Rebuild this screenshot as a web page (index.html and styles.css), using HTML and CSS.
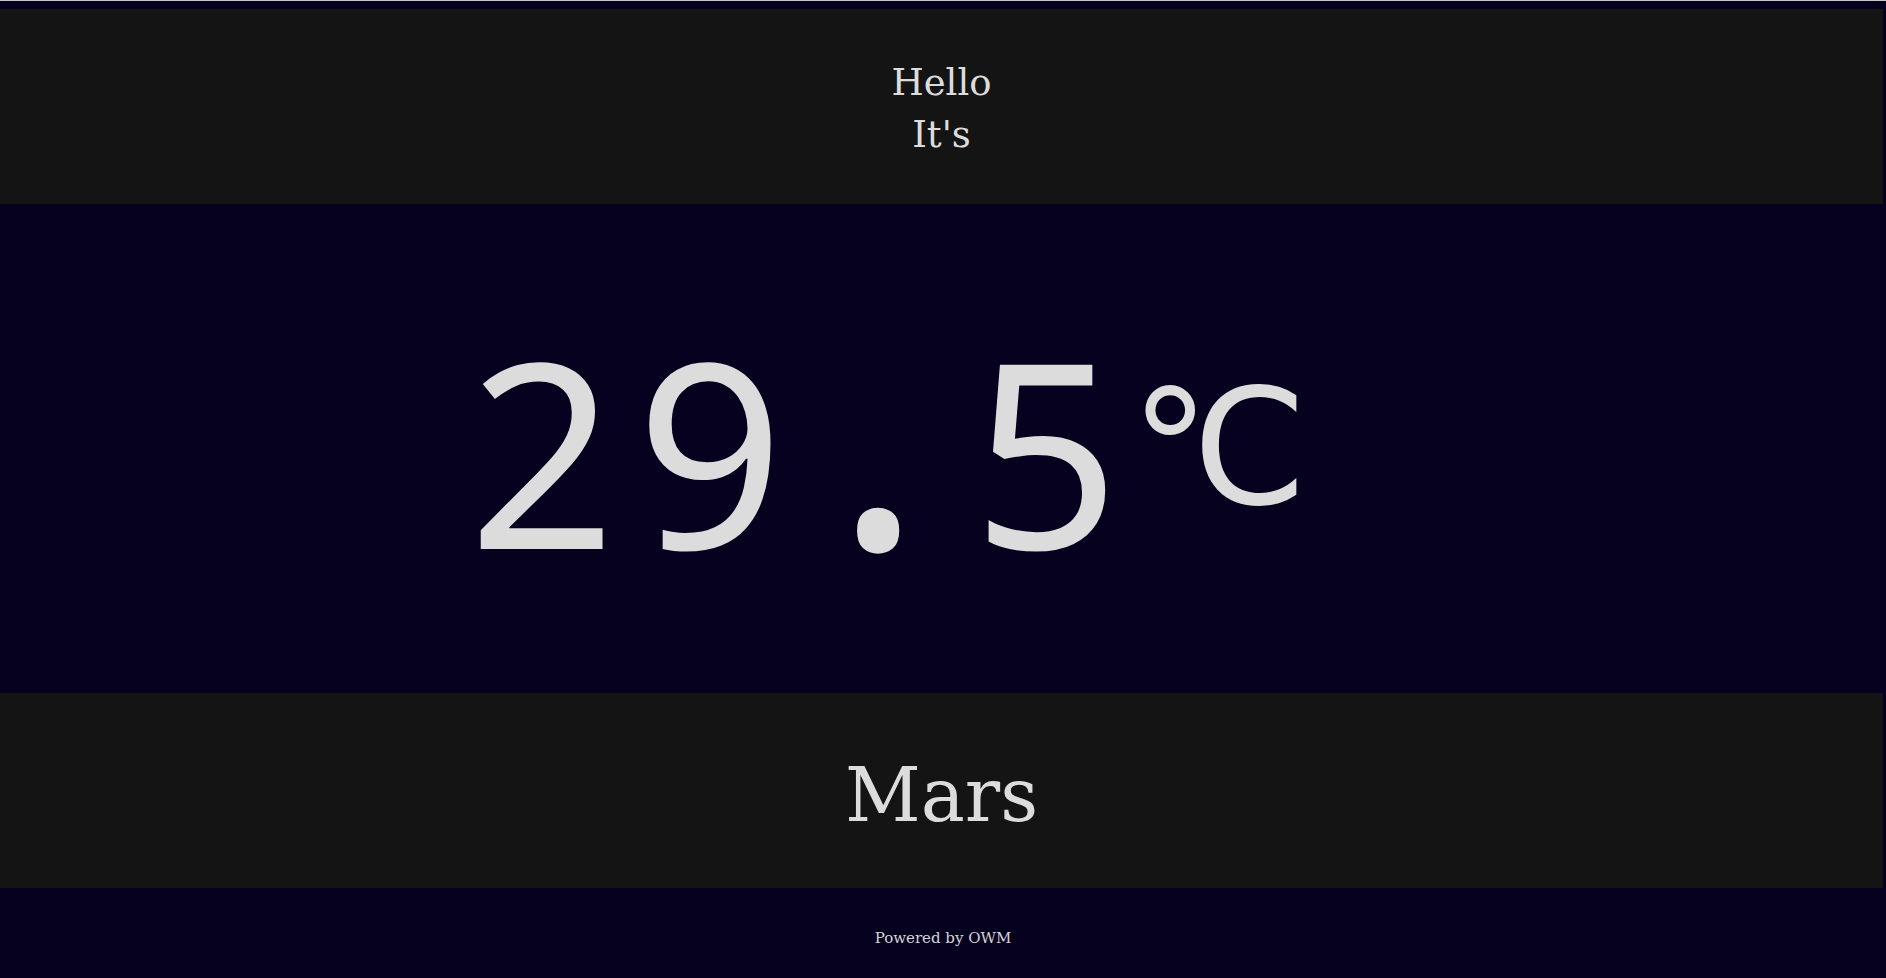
FILE: index.html
```html
<!DOCTYPE html>
<html lang="en">
<head>
<meta charset="utf-8">
<title>Weather</title>
<link rel="stylesheet" href="styles.css">
</head>
<body>
<div class="page">
  <header class="band greeting">
    <div class="line">Hello</div>
    <div class="line">It's</div>
  </header>
  <main class="temp">
    <div class="temp-value"><span class="digits"><span class="ch">2</span><span class="ch">9</span><span class="ch"><span class="dot">.</span></span><span class="ch">5</span></span><span class="unit">°C</span></div>
  </main>
  <section class="band place">
    <div class="planet">Mars</div>
  </section>
  <footer class="footer">Powered by OWM</footer>
</div>
</body>
</html>
```
FILE: styles.css
```css
html, body {
  margin: 0;
  padding: 0;
}
body {
  background: #05011e;
  border-top: 1px solid #c8c8c8;
  color: #dcdcdc;
  font-family: "DejaVu Serif", serif;
  height: 977px;
  overflow: hidden;
}
.page {
  padding-top: 8px;
  display: flex;
  flex-direction: column;
}
.band {
  background: #141414;
  height: 195px;
  margin-right: 3px;
  display: flex;
  flex-direction: column;
  align-items: center;
  justify-content: center;
}
.greeting {
  font-size: 37px;
  line-height: 52px;
  padding-top: 4px;
  box-sizing: border-box;
}
.temp {
  height: 489px;
  box-sizing: border-box;
  padding-top: 0;
  display: flex;
  align-items: center;
  justify-content: center;
  font-family: "Noto Sans", "DejaVu Sans", sans-serif;
  color: #dcdcdc;
}
.temp-value {
  font-size: 258px;
  padding-right: 140px;
  white-space: nowrap;
}
.ch {
  display: inline-block;
  width: 168px;
  text-align: center;
}
.dot {
  font-size: 340px;
  line-height: 0;
}
.unit {
  font-family: "DejaVu Sans", sans-serif;
  font-size: 160px;
  letter-spacing: -17px;
  vertical-align: 45px;
}
.place {
  font-size: 74px;
  padding-top: 8px;
  box-sizing: border-box;
}
.footer {
  height: 90px;
  box-sizing: border-box;
  padding-top: 9px;
  display: flex;
  align-items: center;
  justify-content: center;
  font-size: 15px;
  color: #d4d4d8;
}
```
